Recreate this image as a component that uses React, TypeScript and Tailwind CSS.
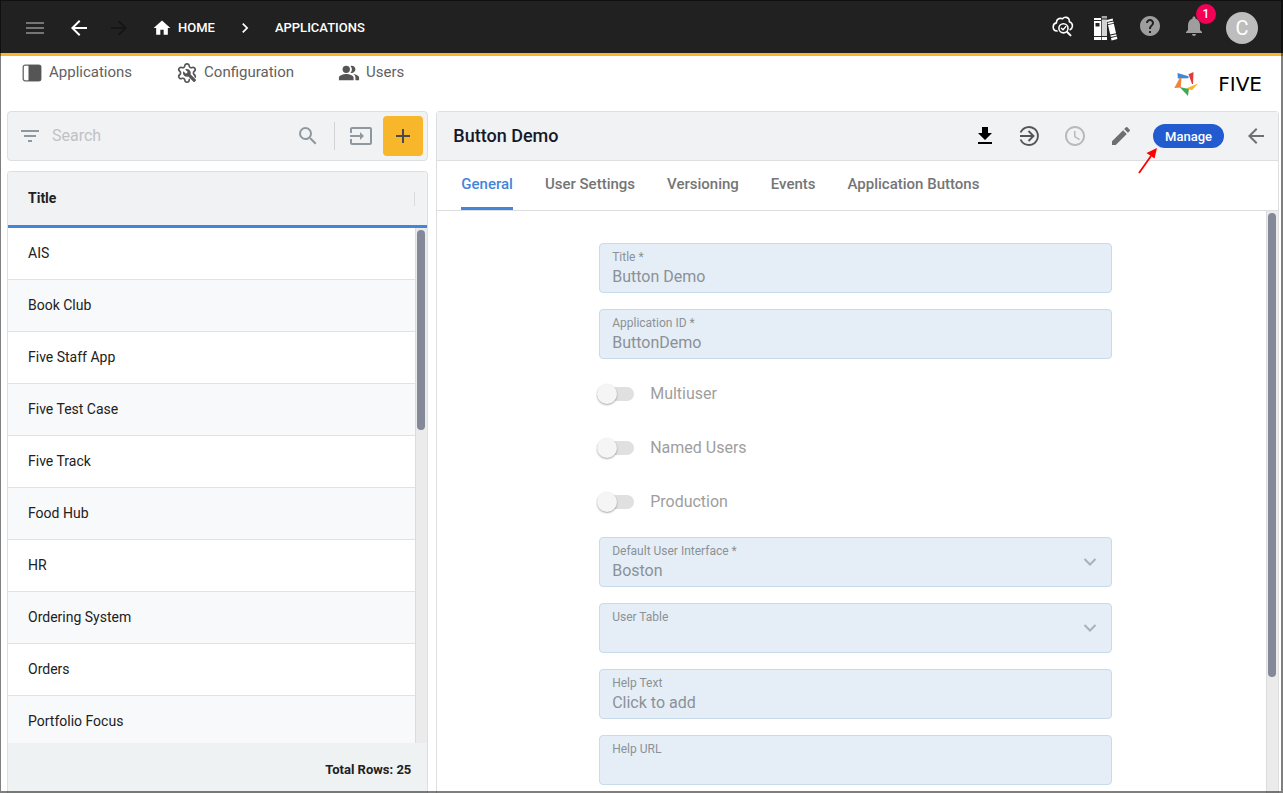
import { useState } from 'react';
import { clsx } from 'clsx';
import {
    MdAccessTime, MdAdd, MdArrowBack, MdArrowForward, MdChevronRight, MdEdit, MdFilterList,
    MdHelp, MdHome, MdInput, MdMenu, MdNotifications, MdPeopleAlt, MdSearch,
} from 'react-icons/md';

const applications = [
    'AIS', 'Book Club', 'Five Staff App', 'Five Test Case', 'Five Track', 'Food Hub',
    'HR', 'Ordering System', 'Orders', 'Portfolio Focus',
];

const tabs = ['General', 'User Settings', 'Versioning', 'Events', 'Application Buttons'];

function CloudSearchIcon() {
    return (
        <svg width="22" height="22" viewBox="0 0 24 24" fill="none" stroke="currentColor" strokeLinecap="round" strokeLinejoin="round">
            <path strokeWidth="1.7" d="M5.5 17.5C3 17.2 1.300 15.300 1.300 13c0-2.200 1.500-4 3.500-4.400C4.900 5.900 6.600 3.900 9 3.700c1-.1 1.800.1 2.500.5 1-1.300 2.500-1.900 4-1.600 2.200.4 3.600 2.300 3.400 4.700 2.100.7 3.500 2.500 3.400 4.700-.1 1.800-1 3.300-2.600 4.100" />
            <circle cx="12.500" cy="14.500" r="5" strokeWidth="1.700" />
            <path strokeWidth="1.600" d="m10.300 14.500 1.700 1.700 3-3.500" />
            <path strokeWidth="2.200" d="m16.500 18.500 3.700 3.700" />
        </svg>
    );
}

function BooksIcon() {
    return (
        <svg width="26" height="26" viewBox="0 0 26 26">
            <path fill="#fff" d="M0 3h7v2H0zM0 6h7v15H0zM0 22h7v3H0zM7.700 22h5.300v3H7.700z" />
            <path fill="#212121" d="M1.500 8h4v3.500h-4z" />
            <path fill="#a6a6a6" d="M7.700 1H13v2.500H7.700z" />
            <path fill="#d4d4d4" d="M7.700 4.500H13V21H7.700z" />
            <g transform="rotate(-13 18 14)" fill="#fff">
                <path d="M15 4h6v2h-6zM15 7h6v1.500h-6zM15 9.300h6V19h-6zM15 20h6v1.500h-6zM15 22.500h6V25h-6z" />
            </g>
        </svg>
    );
}

function SidebarIcon() {
    return (
        <svg width="20" height="20" viewBox="0 0 20 20">
            <rect x="1.200" y="2.200" width="17.600" height="15.600" rx="2" fill="#fff" stroke="#666" strokeWidth="1.300" />
            <path fill="#555" d="M6.500 2H17a2 2 0 0 1 2 2v12a2 2 0 0 1-2 2H6.500z" />
        </svg>
    );
}

function ConfigIcon() {
    return (
        <svg width="22" height="22" viewBox="0 0 24 24">
            <path fill="none" stroke="#555" strokeWidth="1.800" d="M9.671 4.136a2.340 2.340 0 0 1 4.659 0 2.340 2.340 0 0 0 3.319 1.915 2.340 2.340 0 0 1 2.330 4.033 2.340 2.340 0 0 0 0 3.831 2.340 2.340 0 0 1-2.330 4.033 2.340 2.340 0 0 0-3.319 1.915 2.340 2.340 0 0 1-4.659 0 2.340 2.340 0 0 0-3.320-1.915 2.340 2.340 0 0 1-2.330-4.033 2.340 2.340 0 0 0 0-3.831A2.340 2.340 0 0 1 6.350 6.051a2.340 2.340 0 0 0 3.319-1.915" />
            <path transform="translate(7 7) scale(.65)" fill="#555" stroke="#fff" strokeWidth="2.500" paintOrder="stroke" d="M22.700 19l-9.100-9.100c.9-2.300.4-5-1.500-6.900-2-2-5-2.400-7.400-1.300L9 6 6 9 1.600 4.700C.4 7.100.9 10.100 2.900 12.100c1.900 1.900 4.600 2.400 6.900 1.500l9.100 9.100c.4.4 1 .4 1.400 0l2.300-2.300c.5-.4.5-1.100.1-1.400z" />
        </svg>
    );
}

function DownloadIcon() {
    return (
        <svg width="24" height="24" viewBox="0 0 24 24" fill="#000">
            <path d="M19 9h-4V3H9v6H5l7 7 7-7zM5 18v2h14v-2z" />
        </svg>
    );
}

function EnterIcon() {
    return (
        <svg width="24" height="24" viewBox="0 0 24 24" fill="none" stroke="#555" strokeWidth="1.900">
            <path d="M3.600 8.500a9 9 0 1 1 0 7" />
            <path d="M3 12h13M11.500 7l5 5-5 5" />
        </svg>
    );
}

function FiveLogo() {
    return (
        <a href="#" className="flex w-[88px] items-center justify-between pt-4 text-black">
            <svg width="24" height="24" viewBox="0 0 24 24">
                <path fill="#3f87d9" d="M3.500 1l11 3.300v1.900l-10.700.3z" />
                <path fill="#e4393c" d="M19.500 0l-5 2.200L18 12h1z" />
                <path fill="#f8b62b" d="M24 11.500l-12 5 6 1.700z" />
                <path fill="#41a956" d="M5.500 15l8.500 9 .9-7z" />
                <path fill="#f58233" d="M6 5.500L.3 16l6.400-.5.8-8.500z" />
            </svg>
            <span className="font-['DejaVu_Sans',sans-serif] text-xl leading-6">FIVE</span>
        </a>
    );
}

function TextField({ id, label, value = '' }: { id: string; label: string; value?: string }) {
    return (
        <div className="h-[50px] rounded-sm border border-[#c8dbed] bg-[#e5eef6] px-3 pt-[5px] text-[#8b9197]">
            <label htmlFor={id} className="block text-xs leading-4">{label}</label>
            <input id={id} type="text" defaultValue={value} disabled className="block w-full bg-transparent text-base leading-6 outline-none" />
        </div>
    );
}

function SelectField({ id, label, value = '' }: { id: string; label: string; value?: string }) {
    return (
        <div className="relative h-[50px] rounded-sm border border-[#c8dbed] bg-[#e5eef6] px-3 pt-[5px] text-[#8b9197]">
            <label htmlFor={id} className="block text-xs leading-4">{label}</label>
            <select id={id} disabled defaultValue={value} className="block w-full appearance-none bg-transparent text-base leading-6 opacity-100 outline-none">
                <option value={value}>{value}</option>
            </select>
            <svg className="absolute top-[17px] right-[14px]" width="14" height="14" viewBox="0 0 14 14" fill="none" stroke="#a9b0b6" strokeWidth="2">
                <path d="M1.500 4l5.500 5.500L12.500 4" />
            </svg>
        </div>
    );
}

function Toggle({ label }: { label: string }) {
    return (
        <label className="-ml-0.5 flex h-[38px] items-center gap-4 text-base text-[#9e9e9e]">
            <span className="flex h-5 w-[37px] items-center">
                <input type="checkbox" role="switch" disabled className="peer sr-only" />
                <span className="flex h-3.5 w-[37px] items-center rounded-full bg-[#e0e0e0]">
                    <span className="size-5 rounded-full bg-[#f5f5f5] shadow-[0_1px_2px_rgba(0,0,0,0.35)]" />
                </span>
            </span>
            {label}
        </label>
    );
}

export default function App() {
    const [activeTab, setActiveTab] = useState('General');
    const [search, setSearch] = useState('');

    return (
        <div className="relative flex h-screen flex-col overflow-hidden bg-white font-[Roboto,sans-serif] text-[#212121]">
            <header className="flex h-14 shrink-0 items-center justify-between border-b-3 border-[#f8b62b] bg-[#212121] pt-[3px] pr-[25px] pl-[23px] text-white">
                <div className="flex items-center">
                    <button aria-label="Menu" className="text-[#757575]"><MdMenu size={24} /></button>
                    <button aria-label="Back" className="ml-5"><MdArrowBack size={24} /></button>
                    <button aria-label="Forward" disabled className="ml-4 text-[#161616]"><MdArrowForward size={24} /></button>
                    <nav aria-label="Breadcrumb" className="ml-[21px] flex items-center text-[13px] font-medium">
                        <a href="#" className="flex items-center gap-1.5"><MdHome size={20} />HOME</a>
                        <MdChevronRight size={20} className="mx-5" />
                        <a href="#">APPLICATIONS</a>
                    </nav>
                </div>
                <div className="flex items-center">
                    <button aria-label="Inspect" className="pb-1"><CloudSearchIcon /></button>
                    <button aria-label="Library" className="ml-5"><BooksIcon /></button>
                    <button aria-label="Help" className="ml-[18px] pb-1 text-[#9e9e9e]"><MdHelp size={24} /></button>
                    <button aria-label="Notifications" className="relative ml-5 pb-1 text-[#9e9e9e]">
                        <MdNotifications size={24} />
                        <span className="absolute -top-2.5 -right-2.5 flex size-5 items-center justify-center rounded-full bg-[#f50057] text-xs font-medium text-white">1</span>
                    </button>
                    <button aria-label="Account" className="ml-5 flex size-8 items-center justify-center rounded-full bg-[#bdbdbd] text-xl text-white">C</button>
                </div>
            </header>

            <div className="flex h-[55px] shrink-0 items-start justify-between pr-[21px] pl-[22px]">
                <nav className="flex h-[34px] items-center gap-11 text-[15px] leading-5 text-[#616161]">
                    <a href="#" className="flex items-center gap-[7px]"><SidebarIcon /><span className="pb-0.5">Applications</span></a>
                    <a href="#" className="flex items-center gap-1.5"><ConfigIcon /><span className="pb-0.5">Configuration</span></a>
                    <a href="#" className="flex items-center gap-1.5"><MdPeopleAlt size={22} className="text-[#555]" /><span className="pb-0.5">Users</span></a>
                </nav>
                <FiveLogo />
            </div>

            <main className="grid min-h-0 flex-1 grid-cols-[minmax(0,1fr)_minmax(0,2fr)] gap-2 pr-1 pl-[7px]">
                <section className="flex min-h-0 flex-col gap-2.5">
                    <div className="flex h-[50px] shrink-0 items-center rounded border border-[#dcdee0] bg-[#f1f2f4] pr-1 pl-2.5 text-[#90989f]">
                        <button aria-label="Filter"><MdFilterList size={24} /></button>
                        <input
                            type="text"
                            aria-label="Search"
                            placeholder="Search"
                            value={search}
                            onChange={(e) => setSearch(e.target.value)}
                            className="ml-2.5 min-w-0 flex-1 bg-transparent text-base text-[#212121] outline-none placeholder:text-[#bfc2c5]"
                        />
                        <button aria-label="Run search"><MdSearch size={24} /></button>
                        <div className="mx-3.5 h-7 w-px bg-[#d0d2d4]" />
                        <button aria-label="Import"><MdInput size={24} /></button>
                        <button aria-label="Add application" className="ml-2.5 flex size-10 items-center justify-center rounded bg-[#f8b62b] text-[#4a4a4a]"><MdAdd size={24} /></button>
                    </div>

                    <div className="flex min-h-0 flex-1 flex-col overflow-hidden rounded-t border border-b-0 border-[#dcdee0]">
                        <div className="flex min-h-0 flex-1">
                            <table className="block w-full overflow-hidden text-sm">
                                <thead className="block">
                                    <tr className="flex h-14 items-center justify-between border-b-3 border-[#4286d8] bg-[#f1f2f4] pl-5">
                                        <th scope="col" className="pb-0.5 font-bold">Title</th>
                                        <td className="h-3.5 w-px bg-[#d8dadc]" />
                                    </tr>
                                </thead>
                                <tbody className="block">
                                    {applications.map((name) => (
                                        <tr key={name} className="flex h-[52px] items-center border-b border-[#e2e2e2] pl-5 odd:bg-white even:bg-[#f8f9fb]">
                                            <td className="pb-0.5">{name}</td>
                                        </tr>
                                    ))}
                                </tbody>
                            </table>
                            <div className="flex w-3 shrink-0 flex-col">
                                <div className="h-14 shrink-0 border-b-3 border-[#4286d8] bg-[#f1f2f4]" />
                                <div className="flex-1 border-l border-[#dcdcdc] bg-[#ebebeb] px-px pt-0.5">
                                    <div className="h-[200px] w-2 rounded-full bg-[#838999]" />
                                </div>
                            </div>
                        </div>
                        <div className="flex h-[50px] shrink-0 items-center justify-end bg-[#eef2f3] pt-1 pr-4 text-[13px] leading-5 font-bold">
                            Total Rows: 25
                        </div>
                    </div>
                </section>

                <section className="flex min-h-0 flex-col rounded-t border border-b-0 border-[#dcdee0]">
                    <div className="flex h-[49px] shrink-0 items-center justify-between border-b border-[#dcdee0] bg-[#f1f2f4] pr-2.5 pl-4">
                        <h1 className="text-lg font-medium text-[#14192b]">Button Demo</h1>
                        <div className="flex items-center gap-5">
                            <DownloadIconButton />
                            <div className="flex items-center gap-[22px]">
                                <button aria-label="Open"><EnterIcon /></button>
                                <button aria-label="History" className="text-[#b8b9bb]"><MdAccessTime size={24} /></button>
                                <button aria-label="Edit" className="text-[#6f6f6f]"><MdEdit size={24} /></button>
                            </div>
                            <div className="relative">
                                <button className="flex h-6 w-[71px] items-center justify-center rounded-full bg-[#215bcf] pt-px text-[13px] font-medium text-white">Manage</button>
                                <svg className="absolute top-6 -left-4" width="22" height="26" viewBox="0 0 22 26">
                                    <path d="M2 25L14 8" stroke="#f00" strokeWidth="1.800" />
                                    <path d="M20 0l-2.500 10.500-8-5.500z" fill="#f00" />
                                </svg>
                            </div>
                            <button aria-label="Close" className="text-[#6f6f6f]"><MdArrowBack size={24} /></button>
                        </div>
                    </div>

                    <div role="tablist" className="flex h-[50px] shrink-0 gap-8 border-b border-[#dcdee0] pl-6 text-[15px] font-medium">
                        {tabs.map((tab) => (
                            <button
                                key={tab}
                                role="tab"
                                aria-selected={tab === activeTab}
                                onClick={() => setActiveTab(tab)}
                                className={clsx(
                                    'rounded-t-xs border-b-3 pt-px',
                                    tab === activeTab ? 'border-[#4286d8] text-[#4286d8]' : 'border-transparent text-[#757575]',
                                )}
                            >
                                {tab}
                            </button>
                        ))}
                    </div>

                    <div className="flex min-h-0 flex-1">
                        <div className="min-w-0 flex-1 overflow-hidden pt-8 pl-2">
                            <form className="mx-auto flex w-full max-w-[513px] flex-col gap-4">
                                <TextField id="title" label="Title *" value="Button Demo" />
                                <TextField id="application-id" label="Application ID *" value="ButtonDemo" />
                                <Toggle label="Multiuser" />
                                <Toggle label="Named Users" />
                                <Toggle label="Production" />
                                <SelectField id="default-ui" label="Default User Interface *" value="Boston" />
                                <SelectField id="user-table" label="User Table" />
                                <TextField id="help-text" label="Help Text" value="Click to add" />
                                <TextField id="help-url" label="Help URL" />
                            </form>
                        </div>
                        <div className="w-3 shrink-0 border-l border-[#dcdcdc] bg-[#ebebeb] px-px pt-0.5">
                            <div className="h-4/5 w-2 rounded-full bg-[#838999]" />
                        </div>
                    </div>
                </section>
            </main>

            {/* window frame */}
            <div className="pointer-events-none absolute inset-0 border-t border-r-2 border-b-2 border-l border-black/50" />
        </div>
    );
}

function DownloadIconButton() {
    return <button aria-label="Download"><DownloadIcon /></button>;
}
